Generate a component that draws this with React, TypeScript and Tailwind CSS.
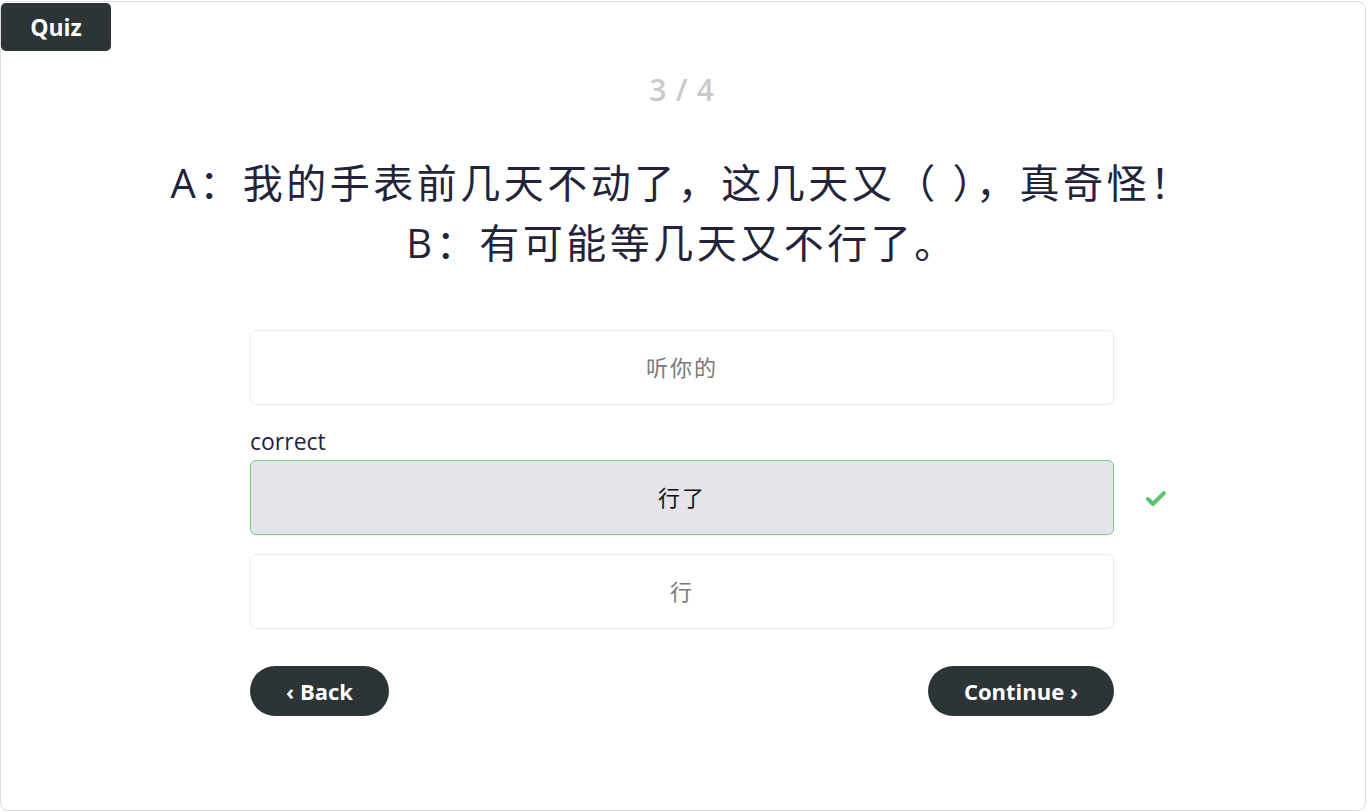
import React from "react";
import { Check } from "lucide-react";

const options = [
  { text: "听你的", correct: false },
  { text: "行了", correct: true },
  { text: "行", correct: false },
];

export default function App() {
  return (
    <div
      className="w-[1368px] h-[812px] bg-white pt-px"
      style={{ fontFamily: '"Open Sans", "Noto Sans CJK SC", sans-serif' }}
    >
      <div className="relative w-[1366px] h-[810px] border border-[#dcdcdc] rounded-lg pr-[2px] flex flex-col items-center">
        <div className="absolute left-0 top-[1px] w-[110px] h-[48px] bg-[#2c3436] rounded-[5px] flex items-center justify-center text-white font-bold text-[23px]">
          Quiz
        </div>

        <div className="mt-[67px] h-[40px] flex items-center text-[30px] font-semibold text-[#cacaca] tracking-wide">
          3 / 4
        </div>

        <div className="mt-[44px] text-center text-[40px] leading-[60px] tracking-[3.5px] text-[#23243a]">
          <p>A：我的手表前几天不动了，这几天又（ ），真奇怪！</p>
          <p>B：有可能等几天又不行了。</p>
        </div>

        <div className="mt-[57px] w-[864px] flex flex-col">
          {options.map((o, i) => (
            <div key={i} className={o.correct ? "mt-[23px]" : i > 0 ? "mt-[19px]" : ""}>
              {o.correct && (
                <div className="mb-[6px] text-[23px] leading-[26px] text-[#23243a]">correct</div>
              )}
              <div className="relative">
                <div
                  className={
                    o.correct
                      ? "h-[75px] rounded-md border border-[#74d07f] bg-[#e4e4ea] flex items-center justify-center text-[22px] tracking-[2px] text-[#111]"
                      : "h-[75px] rounded-md border border-[#ececec] bg-white flex items-center justify-center text-[22px] tracking-[2px] text-[#7a7a7a]"
                  }
                >
                  {o.text}
                </div>
                {o.correct && (
                  <Check
                    className="absolute left-[894px] top-[27px] w-[24px] h-[24px] text-[#5bc46c]"
                    strokeWidth={4}
                  />
                )}
              </div>
            </div>
          ))}

          <div className="mt-[37px] flex justify-between">
            <button className="h-[50px] w-[139px] rounded-full bg-[#2c3436] text-white font-bold text-[22px] flex items-center justify-center">
              ‹ Back
            </button>
            <button className="h-[50px] w-[186px] rounded-full bg-[#2c3436] text-white font-bold text-[22px] flex items-center justify-center">
              Continue ›
            </button>
          </div>
        </div>
      </div>
    </div>
  );
}
